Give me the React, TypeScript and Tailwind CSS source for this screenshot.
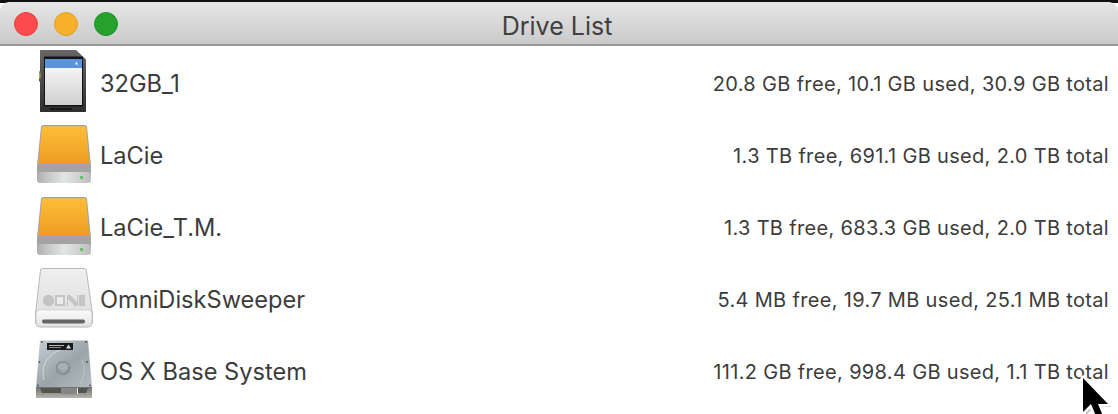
const drives = [
  { name: '32GB_1', info: '20.8 GB free, 10.1 GB used, 30.9 GB total', kind: 'sd' },
  { name: 'LaCie', info: '1.3 TB free, 691.1 GB used, 2.0 TB total', kind: 'orange' },
  { name: 'LaCie_T.M.', info: '1.3 TB free, 683.3 GB used, 2.0 TB total', kind: 'orange' },
  { name: 'OmniDiskSweeper', info: '5.4 MB free, 19.7 MB used, 25.1 MB total', kind: 'omni' },
  { name: 'OS X Base System', info: '111.2 GB free, 998.4 GB used, 1.1 TB total', kind: 'hdd' },
];

const SdIcon = () => (
  <svg className="overflow-visible" width="64" height="64" viewBox="5 4.5 64 64">
    <defs>
      <linearGradient id="sdBody" x1="0" y1="0" x2="0" y2="1">
        <stop offset="0" stopColor="#666666" />
        <stop offset="1" stopColor="#2e2e2e" />
      </linearGradient>
      <linearGradient id="sdLabel" x1="0" y1="0" x2="0" y2="1">
        <stop offset="0" stopColor="#f4f4f4" />
        <stop offset="1" stopColor="#cfcfcf" />
      </linearGradient>
    </defs>
    <path d="M9 3Q9 2.5 10 2.5H45L55 12V64Q55 64.5 54 64.5H10Q9 64.5 9 64V34H8V24H9Z" fill="url(#sdBody)" />
    <rect x="13" y="9" width="39" height="50" rx="1" fill="#141414" />
    <rect x="14" y="11.5" width="37" height="9" fill="#5a93d8" />
    <rect x="14" y="20.5" width="37" height="37" fill="url(#sdLabel)" />
    <path d="M44 17l1.5-3 1.5 3z" fill="#f4f4f4" />
    <rect x="8" y="25" width="1.5" height="6" fill="#b9a94a" />
    <rect x="19" y="60.5" width="22" height="2" fill="#161616" />
  </svg>
);

const OrangeDriveIcon = ({ id }: { id: string }) => (
  <svg className="overflow-visible" width="64" height="64" viewBox="0 0 64 64">
    <defs>
      <linearGradient id={`or${id}`} x1="0" y1="0" x2="0" y2="1">
        <stop offset="0" stopColor="#fdbd38" />
        <stop offset="1" stopColor="#ee9d22" />
      </linearGradient>
      <linearGradient id={`base${id}`} x1="0" y1="0" x2="1" y2="0">
        <stop offset="0" stopColor="#b0b0b0" />
        <stop offset="0.5" stopColor="#e4e6e6" />
        <stop offset="1" stopColor="#bdbdbd" />
      </linearGradient>
    </defs>
    <path d="M5 2.5Q5.2 1 7 1H49Q50.8 1 51 2.5L55 42V53Q55 59 50 59H6Q1 59 1 53V42Z" fill="#a3a3a3" />
    <path d="M6 2.2H50L53.5 40H2.5Z" fill={`url(#or${id})`} />
    <rect x="1" y="48" width="54" height="11" rx="3.5" fill={`url(#base${id})`} />
    <rect x="44" y="52" width="3" height="3" fill="#6cc06c" />
  </svg>
);

const OmniIcon = () => (
  <svg className="overflow-visible" width="64" height="64" viewBox="0 0 64 64">
    <defs>
      <linearGradient id="omniBody" x1="0" y1="0" x2="0" y2="1">
        <stop offset="0" stopColor="#efefef" />
        <stop offset="1" stopColor="#dddddd" />
      </linearGradient>
      <linearGradient id="omniBase" x1="0" y1="0" x2="0" y2="1">
        <stop offset="0" stopColor="#fbfbfb" />
        <stop offset="1" stopColor="#e2e2e2" />
      </linearGradient>
    </defs>
    <path d="M4.5 2Q4.7 0.5 6.5 0.5H48Q50 0.5 50.3 2L56.5 46V53Q56.5 59 51 59H5Q-0.5 59 -0.5 53V46Z" fill="url(#omniBody)" stroke="#a8a8a8" strokeWidth="0.8" />
    <path d="M0 47.5Q0 42 5 42H51Q56 42 56 47.5V53Q56 58.6 51 58.6H5Q0 58.6 0 53Z" fill="url(#omniBase)" stroke="#c4c4c4" strokeWidth="0.6" />
    <circle cx="12.5" cy="32.5" r="5.7" fill="#c4c4c4" />
    <path d="M19 27H29V38H19Z" fill="#c4c4c4" />
    <path d="M21 29H27V36H21Z" fill="#ececec" />
    <path d="M31 27H34L41 34V27H42V38H39L32 31V38H31Z" fill="#c4c4c4" />
    <rect x="43" y="27" width="6" height="11" fill="#c4c4c4" />
    <rect x="6" y="51.5" width="43" height="4" rx="2" fill="#666666" />
  </svg>
);

const HddIcon = () => (
  <svg className="overflow-visible" width="64" height="64" viewBox="0 0 64 64">
    <defs>
      <linearGradient id="hddBody" x1="0" y1="0" x2="1" y2="1">
        <stop offset="0" stopColor="#c3cfd4" />
        <stop offset="0.55" stopColor="#9aa5aa" />
        <stop offset="1" stopColor="#b4bcbf" />
      </linearGradient>
      <radialGradient id="hddHub">
        <stop offset="0" stopColor="#b4bcbf" />
        <stop offset="1" stopColor="#828b8f" />
      </radialGradient>
      <linearGradient id="hddFront" x1="0" y1="0" x2="0" y2="1">
        <stop offset="0" stopColor="#6f6f6a" />
        <stop offset="1" stopColor="#b5b5b0" />
      </linearGradient>
    </defs>
    <path d="M4 0.5H52L56 47H0Z" fill="url(#hddBody)" />
    <path d="M8 40A24 24 0 0 1 38 10" fill="none" stroke="#dbe1e3" strokeWidth="0.8" />
    <path d="M46 20A24 24 0 0 1 44 44" fill="none" stroke="#cdd4d6" strokeWidth="0.6" />
    <ellipse cx="27" cy="28" rx="7.5" ry="7" fill="url(#hddHub)" />
    <ellipse cx="27" cy="26.5" rx="5" ry="3.5" fill="#a6afb2" />
    <rect x="11" y="3" width="26" height="7" fill="#1a1a1a" />
    <rect x="13" y="5" width="15" height="1" fill="#bbbbbb" />
    <rect x="13" y="7" width="12" height="1" fill="#888888" />
    <path d="M30 8.5l2.5-4 2.5 4z" fill="#dddddd" />
    <circle cx="6" cy="2" r="0.9" fill="#4b5356" />
    <circle cx="50" cy="2" r="0.9" fill="#4b5356" />
    <circle cx="3.5" cy="22" r="0.9" fill="#4b5356" />
    <circle cx="51" cy="22" r="0.9" fill="#4b5356" />
    <circle cx="2" cy="45.5" r="0.9" fill="#4b5356" />
    <circle cx="54" cy="45.5" r="0.9" fill="#4b5356" />
    <path d="M0 47H56V58H0Z" fill="url(#hddFront)" />
    <path d="M4 48H52L50 53H6Z" fill="#55554f" />
    <rect x="25" y="48" width="17" height="6" fill="#efefef" />
    <path d="M26 48V54M28 48V54M30 48V54M32 48V54M34 48V54M36 48V54M38 48V54M40 48V54" stroke="#1d1d1d" strokeWidth="1" />
  </svg>
);

const DriveIcon = ({ kind, id }: { kind: string; id: number }) => {
  if (kind === 'sd') return <SdIcon />;
  if (kind === 'orange') return <OrangeDriveIcon id={String(id)} />;
  if (kind === 'omni') return <OmniIcon />;
  return <HddIcon />;
};

const App = () => {
  return (
    <div className="relative w-[1118px] h-[414px] overflow-hidden bg-white font-['Inter','Liberation_Sans',sans-serif] text-[#3c3c3c]">
      <div className="h-[3px] bg-[#111111]" />
      {/* Title bar */}
      <div className="relative -mt-px flex h-[44px] items-center justify-center rounded-t-[9px] border-b-2 border-[#989898] bg-gradient-to-b from-[#e6e6e6] to-[#cacaca] pt-[6px] pr-[4px]">
        <div className="absolute left-[14px] top-[10px] flex gap-[16px]">
          <span className="h-[24px] w-[24px] rounded-full border border-[#e0443e] bg-[#fc4a4f]" />
          <span className="h-[24px] w-[24px] rounded-full border border-[#dea123] bg-[#f7b02c]" />
          <span className="h-[24px] w-[24px] rounded-full border border-[#1a9431] bg-[#28a12c]" />
        </div>
        <span className="text-[25px] leading-none text-[#404040]">Drive List</span>
      </div>

      {/* Drives */}
      <div className="flex flex-col pt-[1.5px]">
        {drives.map((drive, i) => (
          <div key={drive.name} className="flex h-[72px] items-center pl-[36px] pr-[9px]">
            <div className="h-[64px] w-[64px] shrink-0">
              <DriveIcon kind={drive.kind} id={i} />
            </div>
            <span className="text-[23.6px] leading-none">{drive.name}</span>
            <span className="ml-auto text-[20px] leading-none tracking-[0.33px]">{drive.info}</span>
          </div>
        ))}
      </div>

      {/* Cursor */}
      <svg className="absolute left-[1075px] top-[370px]" width="43" height="44" viewBox="0 0 43 44">
        <path d="M11 11V45L19 37L24 49H31L26 37H36Z" fill="#000000" opacity="0.25" />
        <path d="M8 8V42L16 34L21 46H28L23 34H33Z" fill="#000000" stroke="#ffffff" strokeWidth="5" strokeLinejoin="round" paintOrder="stroke" />
      </svg>
    </div>
  );
};

export default App;
